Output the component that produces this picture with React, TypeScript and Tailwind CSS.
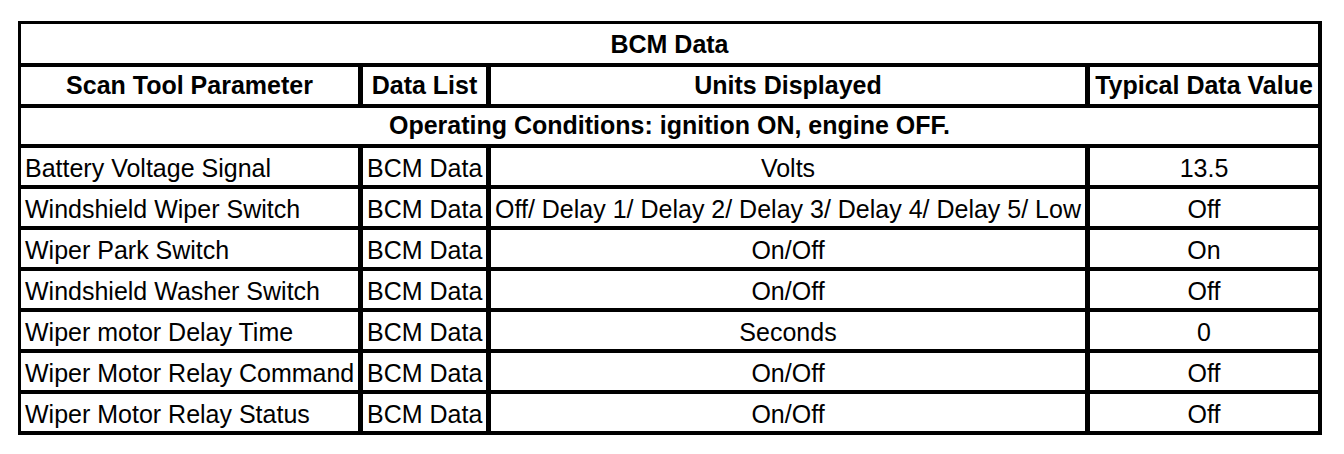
import React from "react";

const ROWS = [
  { param: "Battery Voltage Signal", list: "BCM Data", units: "Volts", value: "13.5" },
  { param: "Windshield Wiper Switch", list: "BCM Data", units: "Off/ Delay 1/ Delay 2/ Delay 3/ Delay 4/ Delay 5/ Low", value: "Off" },
  { param: "Wiper Park Switch", list: "BCM Data", units: "On/Off", value: "On" },
  { param: "Windshield Washer Switch", list: "BCM Data", units: "On/Off", value: "Off" },
  { param: "Wiper motor Delay Time", list: "BCM Data", units: "Seconds", value: "0" },
  { param: "Wiper Motor Relay Command", list: "BCM Data", units: "On/Off", value: "Off" },
  { param: "Wiper Motor Relay Status", list: "BCM Data", units: "On/Off", value: "Off" },
];

const cell = "bg-white flex items-center whitespace-nowrap text-black";

export default function App() {
  return (
    <div className="w-[1344px] h-[454px] bg-white pt-[21px] pl-[18px] font-['Liberation_Sans',Arial,sans-serif] text-[25px] leading-none">
      <div className="w-[1304px] bg-black pt-[3px] pl-[3px] pr-[4px] pb-[4px] grid grid-cols-[337px_123px_594px_228px] gap-x-[5px] gap-y-[4px]">
        {/* title */}
        <div className={`${cell} col-span-4 h-[39px] justify-center font-bold pt-[2px]`}>BCM Data</div>

        {/* header */}
        <div className={`${cell} h-[37px] justify-center font-bold`}>Scan Tool Parameter</div>
        <div className={`${cell} h-[37px] justify-center font-bold`}>Data List</div>
        <div className={`${cell} h-[37px] justify-center font-bold`}>Units Displayed</div>
        <div className={`${cell} h-[37px] justify-center font-bold`}>Typical Data Value</div>

        {/* operating conditions */}
        <div className={`${cell} col-span-4 h-[36px] justify-center font-bold pb-[2px]`}>
          Operating Conditions: ignition ON, engine OFF.
        </div>

        {ROWS.map((r) => (
          <React.Fragment key={r.param}>
            <div className={`${cell} h-[37px] pl-[4px] pt-[3px]`}>{r.param}</div>
            <div className={`${cell} h-[37px] pl-[4px] pt-[3px]`}>{r.list}</div>
            <div className={`${cell} h-[37px] justify-center pt-[3px]`}>{r.units}</div>
            <div className={`${cell} h-[37px] justify-center pt-[3px]`}>{r.value}</div>
          </React.Fragment>
        ))}
      </div>
    </div>
  );
}
